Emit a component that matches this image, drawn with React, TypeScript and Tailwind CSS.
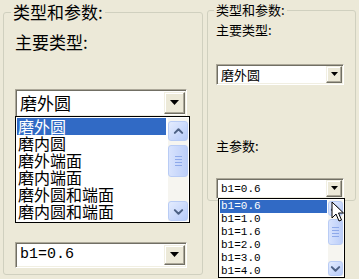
import React from 'react';

const sunken =
  'border border-t-[#ACA899] border-l-[#ACA899] border-b-white border-r-white shadow-[inset_1px_1px_0_#716F64,inset_-1px_-1px_0_#F1EFE2]';
const raised =
  'bg-[#ECE9D8] border border-t-[#F1EFE2] border-l-[#F1EFE2] border-b-[#716F64] border-r-[#716F64] shadow-[inset_-1px_-1px_0_#ACA899,inset_1px_1px_0_#fff]';

function Triangle({ w }: { w: number }) {
  return (
    <svg width={w} height={Math.ceil(w / 2) + 1} viewBox={`0 0 ${w} ${Math.ceil(w / 2) + 1}`}>
      <polygon points={`0,0 ${w},0 ${w / 2},${Math.ceil(w / 2)}`} fill="#000" />
    </svg>
  );
}

function Chevron({ up, size }: { up?: boolean; size: number }) {
  const d = up ? 'M2 7 L6 3 L10 7' : 'M2 4 L6 8 L10 4';
  return (
    <svg width={size} height={size} viewBox="0 0 12 11">
      <path d={d} fill="none" stroke="#4D6185" strokeWidth="2.2" strokeLinecap="round" strokeLinejoin="round" />
    </svg>
  );
}

function ScrollBtn({ up, h, w }: { up?: boolean; h: string; w: string }) {
  return (
    <div
      className={`${h} ${w} flex items-center justify-center rounded-[3px] border border-[#B9CCF5] bg-gradient-to-br from-[#E4ECFE] to-[#B7CBF9]`}
    >
      <Chevron up={up} size={11} />
    </div>
  );
}

function Thumb({ h }: { h: string }) {
  return (
    <div
      className={`${h} flex flex-col items-center justify-center gap-[2px] rounded-[3px] border border-[#B9CCF5] bg-gradient-to-r from-[#D8E3FD] to-[#BCCEF9]`}
    >
      {[0, 1, 2, 3].map((i) => (
        <div key={i} className="h-px w-[7px] bg-[#8EA9EA]" />
      ))}
    </div>
  );
}

function Combo({
  text,
  h,
  w,
  textCls,
  btn,
  tri,
  children,
}: {
  text: string;
  h: string;
  w: string;
  textCls: string;
  btn: string;
  tri: number;
  children?: React.ReactNode;
}) {
  return (
    <div className={`relative ${h} ${w} ${sunken} flex items-center bg-white`}>
      <span className={`flex-1 pl-[4px] ${textCls}`}>{text}</span>
      <div className={`${btn} ${raised} mr-[1px] flex items-center justify-center`}>
        <Triangle w={tri} />
      </div>
      {children}
    </div>
  );
}

const bigItems = ['磨外圆', '磨内圆', '磨外端面', '磨内端面', '磨外圆和端面', '磨内圆和端面'];
const smallItems = ['b1=0.6', 'b1=1.0', 'b1=1.6', 'b1=2.0', 'b1=3.0', 'b1=4.0'];

export default function App() {
  return (
    <div className="flex h-[279px] w-[359px] overflow-hidden bg-[#ECE9D8] font-['Noto_Sans_CJK_SC','Liberation_Sans',sans-serif] text-black">
      {/* left capture */}
      <div className="w-[205px] pl-[3px] pt-[2px]">
        <fieldset className="h-[273px] w-[200px] rounded-[3px] border border-[#D0D0BF]">
          <legend className="ml-[7px] px-[2px] text-[17px] leading-[20px]">类型和参数:</legend>
          <div className="pl-[11px]">
            <div className="mt-[10px] text-[17px] leading-[20px]">主要类型:</div>
            <div className="mt-[37px]">
              <Combo text="磨外圆" h="h-[28px]" w="w-[172px]" textCls="text-[17px] leading-[20px]" btn="h-[22px] w-[21px]" tri={9}>
                <div className="absolute left-[-1px] top-full z-10 flex h-[107px] w-[175px] border border-black bg-white p-[1px]">
                  <div className="flex-1">
                    {bigItems.map((t, i) => (
                      <div
                        key={t}
                        className={`h-[17px] pl-[1px] text-[16px] leading-[17px] ${i === 0 ? 'bg-[#316AC5] text-white' : ''}`}
                      >
                        {t}
                      </div>
                    ))}
                  </div>
                  <div className="ml-[2px] flex w-[20px] flex-col bg-[#F6F5F0] pt-[3px]">
                    <ScrollBtn up h="h-[20px]" w="w-[20px]" />
                    <div className="mt-[4px]">
                      <Thumb h="h-[32px]" />
                    </div>
                    <div className="flex-1" />
                    <ScrollBtn h="h-[20px]" w="w-[20px]" />
                  </div>
                </div>
              </Combo>
            </div>
            <div className="mt-[125px]">
              <Combo
                text="b1=0.6"
                h="h-[26px]"
                w="w-[172px]"
                textCls="font-['Liberation_Mono',monospace] text-[15px] leading-[18px]"
                btn="h-[20px] w-[21px]"
                tri={9}
              />
            </div>
          </div>
        </fieldset>
      </div>

      {/* right capture */}
      <div className="relative w-[154px] pl-[2px] pt-[2px]">
        <fieldset className="h-[199px] w-[149px] rounded-[3px] border border-[#D0D0BF]">
          <legend className="ml-[6px] px-[2px] text-[13px] leading-[16px]">类型和参数:</legend>
          <div className="pl-[8px]">
            <div className="mt-[4px] text-[13px] leading-[16px]">主要类型:</div>
            <div className="mt-[26px]">
              <Combo text="磨外圆" h="h-[21px]" w="w-[128px]" textCls="text-[13px] leading-[16px]" btn="h-[17px] w-[16px]" tri={7} />
            </div>
            <div className="mt-[53px] text-[13px] leading-[16px]">主参数:</div>
            <div className="mt-[24px]">
              <Combo
                text="b1=0.6"
                h="h-[21px]"
                w="w-[128px]"
                textCls="font-['Liberation_Mono',monospace] text-[11px] leading-[14px]"
                btn="h-[17px] w-[16px]"
                tri={7}
              >
                <div className="absolute left-[1px] top-full z-10 flex h-[80px] w-[127px] border border-black bg-white p-[1px]">
                  <div className="flex-1 font-['Liberation_Mono',monospace] text-[11px]">
                    {smallItems.map((t, i) => (
                      <div
                        key={t}
                        className={`h-[13px] pl-[1px] leading-[13px] ${i === 0 ? 'bg-[#316AC5] text-white' : ''}`}
                      >
                        {t}
                      </div>
                    ))}
                  </div>
                  <div className="ml-[1px] flex w-[15px] flex-col bg-[#F6F5F0] pt-[1px]">
                    <ScrollBtn up h="h-[15px]" w="w-[15px]" />
                    <div className="mt-[3px]">
                      <Thumb h="h-[26px]" />
                    </div>
                    <div className="flex-1" />
                    <ScrollBtn h="h-[15px]" w="w-[15px]" />
                  </div>
                  <svg className="absolute left-[112px] top-[2px]" width="14" height="22" viewBox="0 0 14 22">
                    <path
                      d="M1 1 L1 17 L5 13 L8 20 L10.5 19 L7.5 12 L12.5 12 Z"
                      fill="#fff"
                      stroke="#000"
                      strokeWidth="1"
                      strokeLinejoin="miter"
                    />
                  </svg>
                </div>
              </Combo>
            </div>
          </div>
        </fieldset>
      </div>
    </div>
  );
}
